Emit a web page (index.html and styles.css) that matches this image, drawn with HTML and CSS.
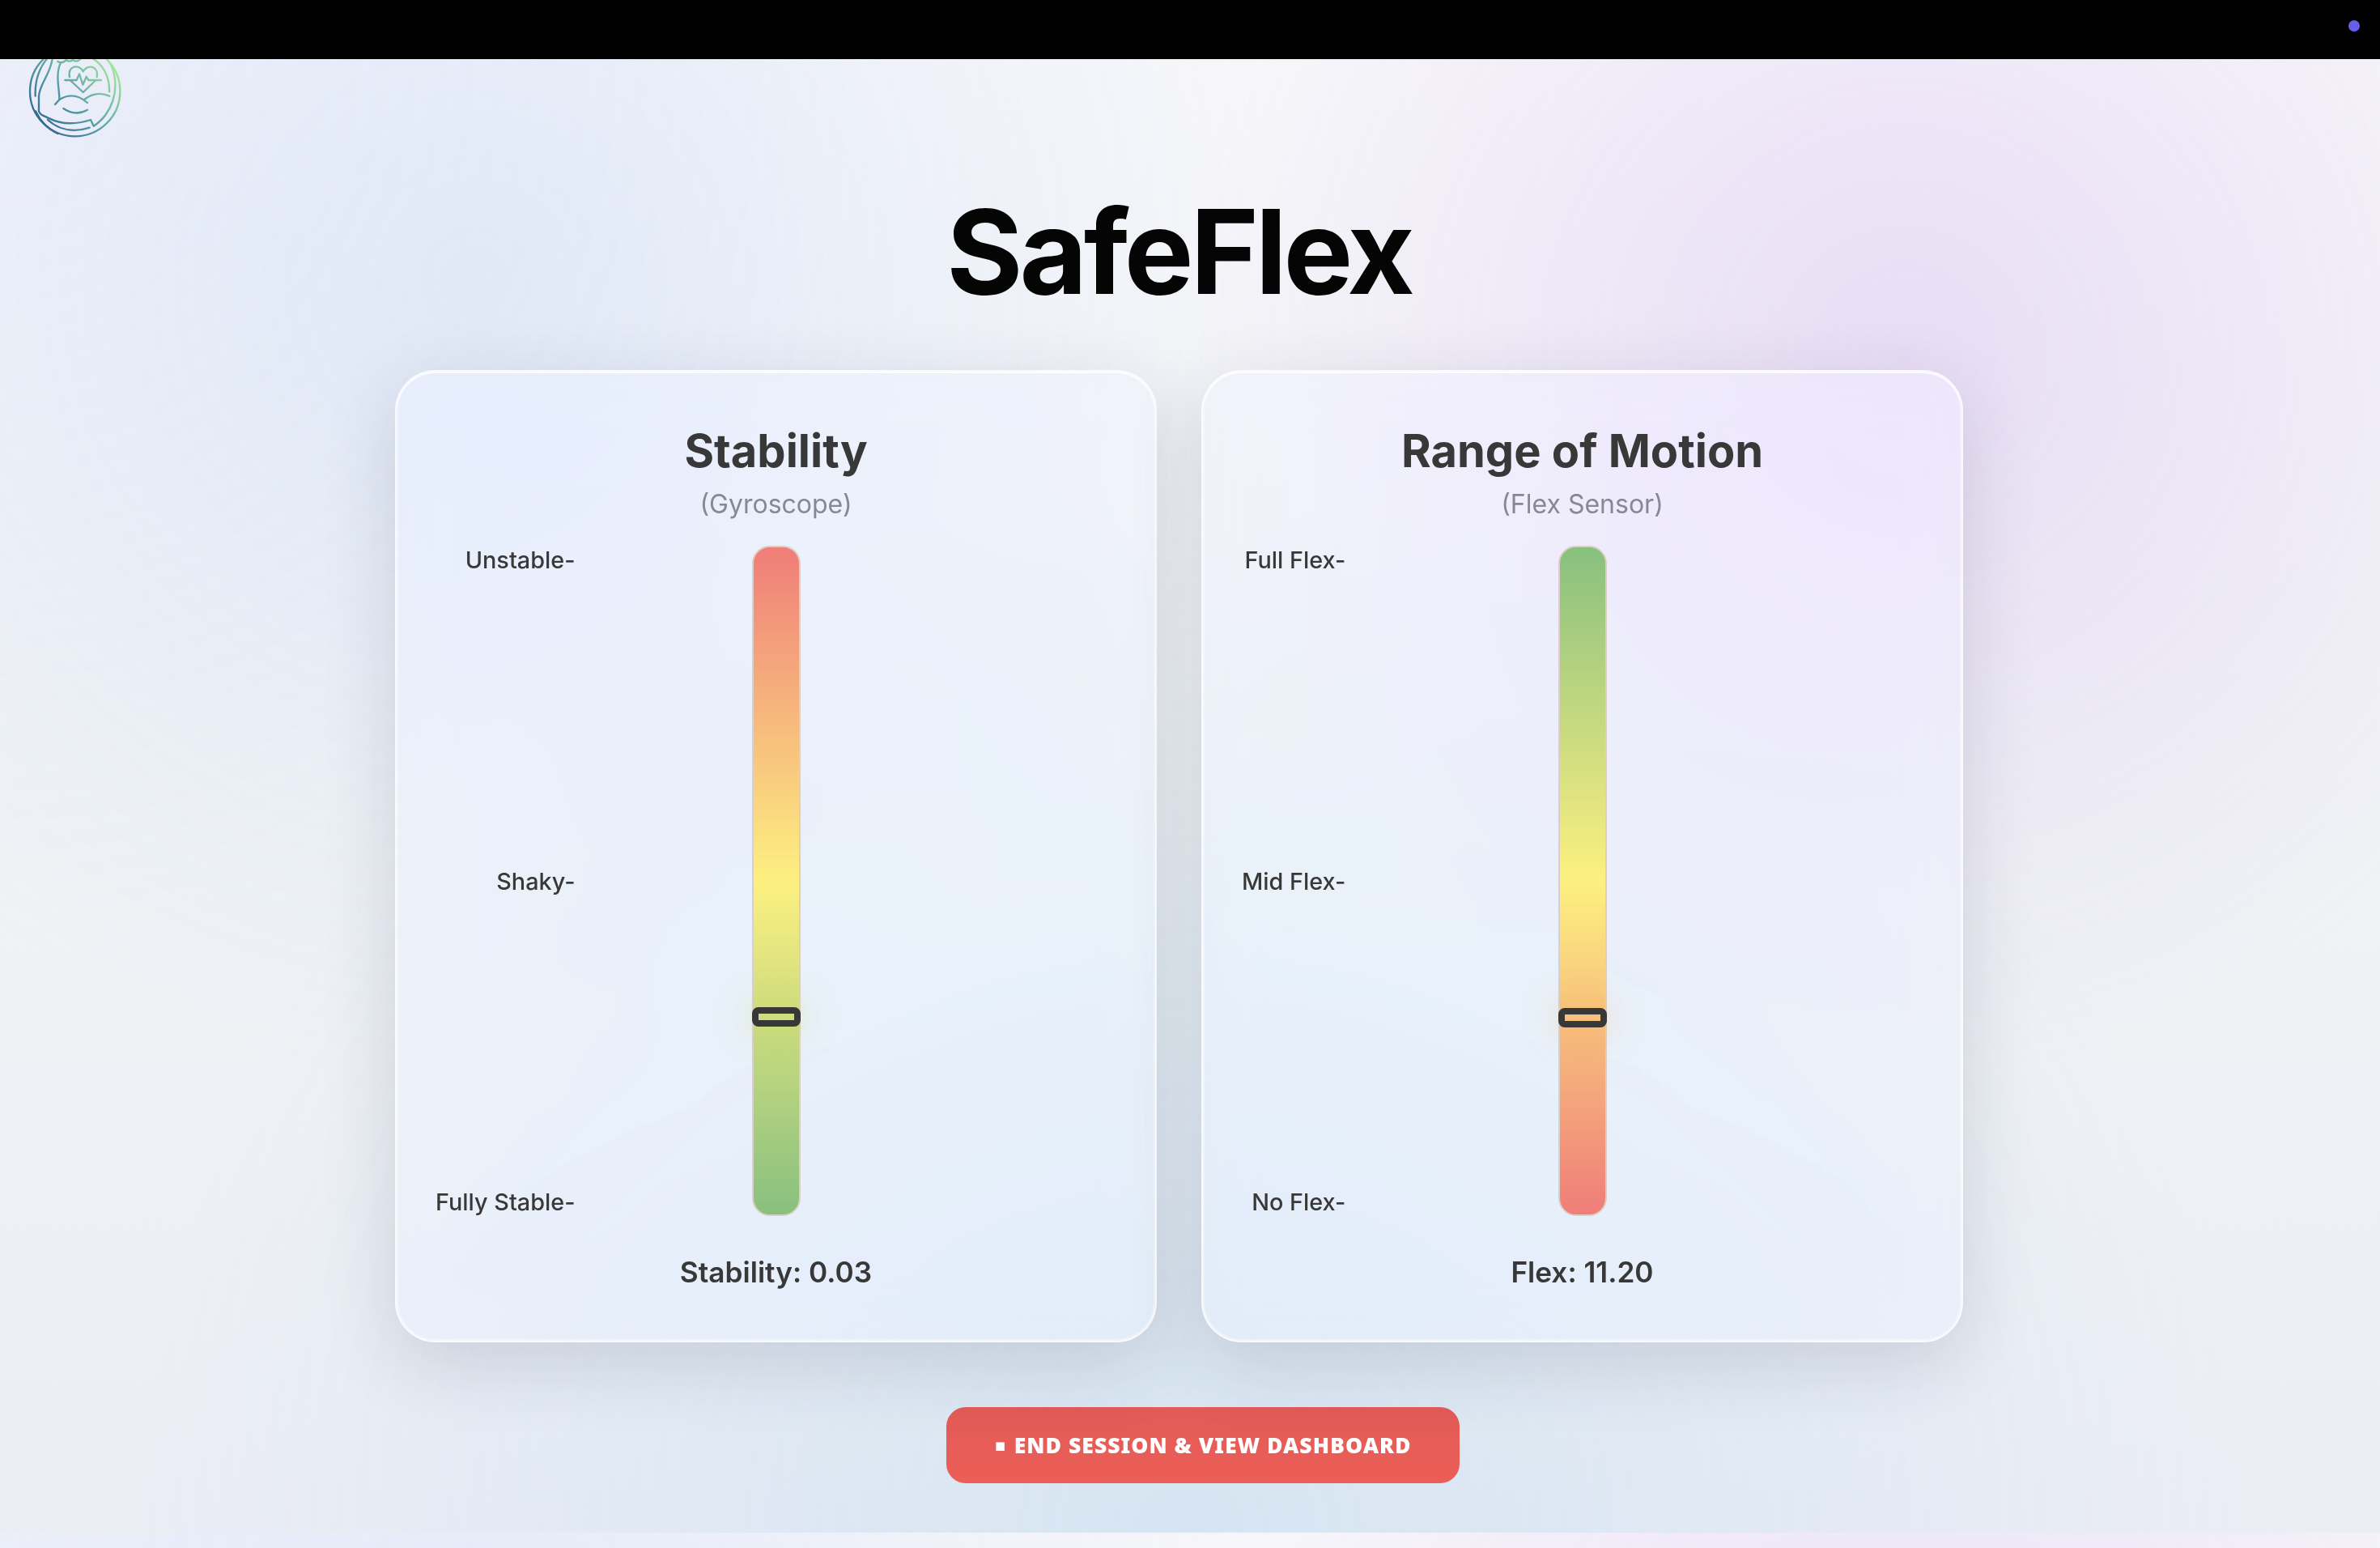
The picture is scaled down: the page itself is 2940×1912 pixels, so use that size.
FILE: index.html
```
<!DOCTYPE html>
<html lang="en">
  <head>
    <meta charset="utf-8">
    <title>SafeFlex</title>
    <link rel="stylesheet" href="styles.css">
  </head>

<body>
  <div class="topbar"><span class="dot"></span></div>

  <div class="page">
    <svg class="logo" viewBox="100 0 360 366" fill="none" stroke="url(#logoGrad)" stroke-width="7" stroke-linecap="round" stroke-linejoin="round">
      <defs>
        <linearGradient id="logoGrad" gradientUnits="userSpaceOnUse" x1="160" y1="310" x2="410" y2="80">
          <stop offset="0" stop-color="#356a94"/>
          <stop offset="0.5" stop-color="#5fa8a8"/>
          <stop offset="1" stop-color="#a5e69a"/>
        </linearGradient>
      </defs>
      <circle cx="279" cy="188" r="167"/>
      <!-- inner ring -->
      <path d="M132 206C130 150 146 100 180 62"/>
      <path d="M335 62C382 84 408 134 406 190"/>
      <path d="M370 44C440 90 446 200 392 276Q374 300 348 317L337 294Q250 322 184 289L160 278Q143 268 145 256V206C148 160 186 130 196 64"/>
      <path d="M133 262Q160 320 215 345"/>
      <path d="M178 294C220 332 275 342 333 323"/>
      <!-- fist and arm -->
      <path d="M215 78Q232 88 246 72Q258 82 271 72Q288 84 301 66"/>
      <path d="M225 84C205 130 222 180 221 219L205 237"/>
      <path d="M221 219Q275 186 325 231"/>
      <path d="M313 219Q358 184 407 206"/>
      <path d="M236 252Q280 282 325 257"/>
      <!-- heart -->
      <path d="M259 135C250 92 296 86 309 115C324 86 368 94 360 135"/>
      <path d="M264 150L309 192L353 150"/>
      <path d="M242 147H285L295 124L308 164L321 134L329 147H376"/>
    </svg>

    <h1 class="title">SafeFlex</h1>

    <div class="cards">
      <div class="card">
        <h2>Stability</h2>
        <p class="sensor">(Gyroscope)</p>
        <div class="gauge">
          <div class="labels">
            <span>Unstable-</span>
            <span>Shaky-</span>
            <span>Fully Stable-</span>
          </div>
          <div class="track track-stability">
            <div class="marker marker-stability" style="top:568px"></div>
          </div>
        </div>
        <p class="value">Stability: 0.03</p>
      </div>

      <div class="card">
        <h2>Range of Motion</h2>
        <p class="sensor">(Flex Sensor)</p>
        <div class="gauge">
          <div class="labels">
            <span>Full Flex-</span>
            <span>Mid Flex-</span>
            <span>No Flex-</span>
          </div>
          <div class="track track-flex">
            <div class="marker marker-flex" style="top:569px"></div>
          </div>
        </div>
        <p class="value">Flex: 11.20</p>
      </div>
    </div>

    <button class="end-btn"><span class="stop">▪</span>END SESSION &amp; VIEW DASHBOARD</button>
  </div>
</body>
</html>
```
FILE: styles.css
```
* {
  box-sizing: border-box;
}

body {
  margin: 0;
  font-family: Inter, "Liberation Sans", sans-serif;
  color: #383838;
}

h1, h2, p {
  margin: 0;
}

.topbar {
  display: flex;
  justify-content: flex-end;
  height: 73px;
  padding: 25px 25px 0 0;
  background: #000;
}

.dot {
  width: 14px;
  height: 14px;
  border-radius: 50%;
  background: #6461e8;
}

/* the background repeats below 1820px */
.page {
  display: flex;
  flex-direction: column;
  align-items: center;
  height: 1839px;
  padding-right: 27px;
  overflow: hidden;
  background:
    radial-gradient(circle at 20% 15%, rgba(110, 160, 240, 0.14), transparent 1000px),
    radial-gradient(circle at 80% 20%, rgba(170, 100, 230, 0.17), transparent 900px),
    radial-gradient(circle at 50% 100%, rgba(120, 190, 230, 0.18), transparent 1300px),
    radial-gradient(circle at 0 0, rgba(205, 210, 245, 0.12), transparent 1100px),
    linear-gradient(180deg, #f7f7fa 0%, #f0f3f5 55%, #ebedf5 100%);
  background-size: 100% 1820px;
}

.logo {
  align-self: flex-start;
  width: 120px;
  height: 122px;
  margin: -23px 0 0 33px;
  flex: none;
}

.title {
  margin-top: 52px;
  font-size: 144px;
  line-height: 174px;
  font-weight: 700;
  letter-spacing: -4.2px;
  color: #050505;
}

.cards {
  display: flex;
  gap: 55px;
  margin-top: 59px;
}

.card {
  width: 941px;
  height: 1201px;
  padding: 64px 48px 0;
  border: 2px solid rgba(255, 255, 255, 0.75);
  border-radius: 50px;
  background: rgba(241, 244, 252, 0.42);
  backdrop-filter: blur(30px) saturate(1.5);
  box-shadow: 0 26px 90px rgba(40, 40, 70, 0.15), inset 0 2px 0 rgba(255, 255, 255, 0.7), inset 0 0 0 2px rgba(255, 255, 255, 0.35);
  text-align: center;
}

.card h2 {
  font-size: 56px;
  line-height: 68px;
  font-weight: 700;
}

.sensor {
  margin-top: 12px;
  font-size: 32px;
  line-height: 39px;
  color: #868994;
}

.gauge {
  display: grid;
  grid-template-columns: 1fr 60px 1fr;
  height: 828px;
  margin-top: 32px;
}

.labels {
  display: flex;
  flex-direction: column;
  justify-content: space-between;
  justify-self: start;
  text-align: right;
  font-size: 28.8px;
  line-height: 35px;
  font-weight: 500;
}

.track {
  position: relative;
  border: 2px solid #dccfc5;
  border-radius: 22px;
}

.track-stability {
  background: linear-gradient(180deg, #f07d79, #fdf080 50%, #88c07f);
}

.track-flex {
  background: linear-gradient(180deg, #88c07f, #fdf080 50%, #f07d79);
}

.marker {
  position: absolute;
  left: -2px;
  width: 60px;
  height: 24px;
  border: 8px solid #383838;
  border-radius: 8px;
}

.marker-stability {
  box-shadow: 0 0 40px rgba(200, 220, 90, 0.5);
}

.marker-flex {
  box-shadow: 0 0 40px rgba(245, 180, 100, 0.5);
}

.value {
  margin-top: 47px;
  font-size: 35.2px;
  line-height: 44px;
  font-weight: 600;
}

.end-btn {
  display: flex;
  align-items: center;
  justify-content: center;
  width: 634px;
  height: 94px;
  margin: 80px 0 0 59px;
  border: 0;
  border-radius: 24px;
  background: linear-gradient(180deg, #e25b57, #ec5e57);
  color: #fff;
  font-family: "Noto Sans", sans-serif;
  font-size: 26.6px;
  font-weight: 900;
  letter-spacing: 1px;
}

.stop {
  margin-right: 9px;
  font-family: "DejaVu Sans", sans-serif;
  font-size: 21px;
}
```
